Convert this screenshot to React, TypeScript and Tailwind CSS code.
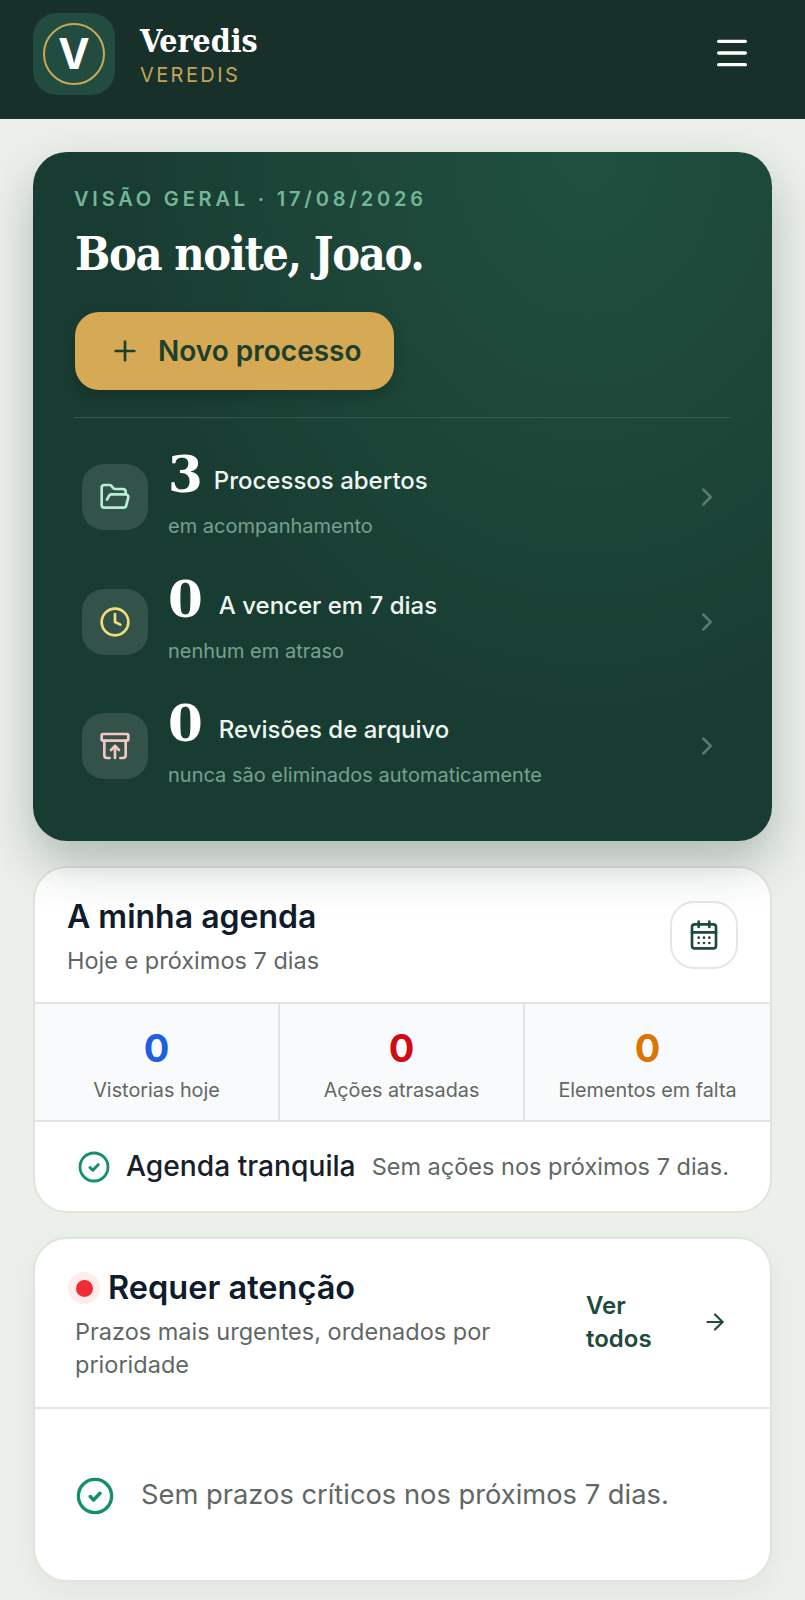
import { ArchiveRestore, ArrowRight, CalendarDays, ChevronRight, Clock, FolderOpen, Menu, Plus } from "lucide-react";

const SERIF = "font-['DejaVu_Serif_Condensed','DejaVu_Serif',serif]";

const STATS = [
  { n: "3", gap: "gap-[11px]", label: "Processos abertos", sub: "em acompanhamento", Icon: FolderOpen, color: "text-[#b5f0d6]" },
  { n: "0", gap: "gap-[16px]", label: "A vencer em 7 dias", sub: "nenhum em atraso", Icon: Clock, color: "text-[#f5dc7c]" },
  { n: "0", gap: "gap-[16px]", label: "Revisões de arquivo", sub: "nunca são eliminados automaticamente", Icon: ArchiveRestore, color: "text-[#f7c6c2]" },
];

const AGENDA = [
  { n: "0", label: "Vistorias hoje", color: "text-[#1d5fe0]" },
  { n: "0", label: "Ações atrasadas", color: "text-[#d10a14]" },
  { n: "0", label: "Elementos em falta", color: "text-[#d97706]" },
];

function Check({ size }: { size: number }) {
  return (
    <svg width={size} height={size} viewBox="0 0 32 32" fill="none" className="shrink-0 text-[#12906a]">
      <circle cx="16" cy="16" r="14" stroke="currentColor" strokeWidth="2.8" />
      <path d="M12 16.5l2.8 2.8 5.4-5.6" stroke="currentColor" strokeWidth="3" strokeLinecap="round" strokeLinejoin="round" />
    </svg>
  );
}

export default function App() {
  return (
    <div className="h-[1600px] overflow-hidden bg-[#ecf0ea] font-['Inter',sans-serif]">
      {/* Header */}
      <header className="flex h-[119px] items-start justify-between bg-[#17302a] pl-[33px] pr-[53px] pt-[13px]">
        <div className="flex items-center gap-[25px]">
          <div className="flex h-[82px] w-[82px] items-center justify-center rounded-[24px] bg-[#214c3f]">
            <div className="flex h-[62px] w-[62px] items-center justify-center rounded-full border-[2.5px] border-[#c9a85a] text-[42px] font-bold leading-none text-white">
              V
            </div>
          </div>
          <div className="-mt-[1px]">
            <div className={`${SERIF} text-[31.8px] font-bold leading-[40px] text-white`}>Veredis</div>
            <div className="mt-[2px] text-[20px] leading-[24px] tracking-[0.12em] text-[#c4a458]">VEREDIS</div>
          </div>
        </div>
        <Menu size={40} strokeWidth={2} className="mt-[20px] text-white" />
      </header>

      <main className="flex flex-col gap-[25px] px-[33px] pt-[33px]">
        {/* Visão geral */}
        <section className="relative z-10 h-[689px] rounded-[34px] bg-[radial-gradient(ellipse_at_75%_0%,#20503f_0%,#1c4538_35%,#193c32_60%)] px-[41px] pt-[33px] shadow-[0_22px_50px_rgba(23,48,42,0.28)]">
          <div className="text-[20px] font-semibold leading-[28px] tracking-[0.19em] text-[#74b798]">
            VISÃO GERAL · 17/08/2026
          </div>
          <h1 className={`${SERIF} ml-[1px] mt-[10px] text-[46.5px] font-bold leading-[62px] tracking-[-0.03em] text-white`}>
            Boa noite, Joao.
          </h1>
          <button
            type="button"
            className="ml-[1px] mt-[27px] flex h-[78px] w-[319px] items-center gap-[17px] rounded-[24px] bg-[#d6a955] pl-[34px] text-[28px] font-semibold text-[#1e3f2b] shadow-[0_6px_14px_rgba(0,0,0,0.18)]"
          >
            <Plus size={32} strokeWidth={2} />
            Novo processo
          </button>
          <div className="mt-[27px] border-t border-[#36594f]" />
          <ul className="mt-[17px] flex flex-col">
            {STATS.map((s) => (
              <li key={s.label} className="flex h-[124.5px] items-center">
                <div className="ml-[8px] flex h-[66px] w-[66px] shrink-0 items-center justify-center rounded-[22px] bg-[#33534a]">
                  <s.Icon size={32} strokeWidth={2} className={s.color} />
                </div>
                <div className="ml-[20px] flex-1 pb-[10px]">
                  <div className={`flex items-baseline ${s.gap}`}>
                    <span className="translate-y-[3px] font-['DejaVu_Serif',serif] text-[50px] font-bold leading-[56px] text-white">
                      {s.n}
                    </span>
                    <span className="text-[24px] font-medium text-[#eef6f1]">{s.label}</span>
                  </div>
                  <div className="mt-[12px] text-[20px] leading-[28px] text-[#76a190]">{s.sub}</div>
                </div>
                <ChevronRight size={30} strokeWidth={2} className="mr-[9px] text-[#58796f]" />
              </li>
            ))}
          </ul>
        </section>

        {/* Agenda */}
        <section className="overflow-hidden rounded-[34px] border-2 border-[#e0e4dd] bg-white">
          <div className="flex h-[134px] items-start justify-between px-[32px] pt-[29px]">
            <div>
              <h2 className="text-[32px] font-semibold leading-[40px] text-[#101c2c]">A minha agenda</h2>
              <p className="mt-[8px] text-[23.5px] leading-[32px] text-[#5f6864]">Hoje e próximos 7 dias</p>
            </div>
            <div className="mt-[4px] flex h-[68px] w-[68px] items-center justify-center rounded-[24px] border-2 border-[#e5e7e2]">
              <CalendarDays size={32} strokeWidth={2} className="text-[#1e4a3d]" />
            </div>
          </div>
          <div className="grid h-[120px] grid-cols-3 divide-x-2 divide-[#e1e4e1] border-y-2 border-[#e1e4e1] bg-[#f9fafb]">
            {AGENDA.map((a) => (
              <div key={a.label} className="flex flex-col items-center pt-[24px]">
                <span className={`text-[38px] font-bold leading-[40px] ${a.color}`}>{a.n}</span>
                <span className="mt-[7px] text-[19.8px] leading-[30px] text-[#5f6864]">{a.label}</span>
              </div>
            ))}
          </div>
          <div className="flex h-[89px] items-center pl-[43px]">
            <Check size={32} />
            <span className="ml-[16px] text-[28.2px] font-medium text-[#17202a]">Agenda tranquila</span>
            <span className="ml-[16px] text-[23.5px] text-[#5f6864]">Sem ações nos próximos 7 dias.</span>
          </div>
        </section>

        {/* Requer atenção */}
        <section className="-mt-[1px] overflow-hidden rounded-[34px] border-2 border-[#e0e4dd] bg-white shadow-[0_10px_30px_rgba(23,48,42,0.05)]">
          <div className="flex h-[168px] items-start justify-between pl-[33px] pr-[42px] pt-[29px]">
            <div className="w-[440px]">
              <div className="flex items-center gap-[8px]">
                <span className="flex h-[32px] w-[32px] items-center justify-center rounded-full bg-[#fdecec]">
                  <span className="h-[17px] w-[17px] rounded-full bg-[#ef2b36]" />
                </span>
                <h2 className="text-[32.5px] font-semibold leading-[40px] text-[#101c2c]">Requer atenção</h2>
              </div>
              <p className="ml-[7px] mt-[7px] text-[23.5px] leading-[33px] text-[#5f6864]">
                Prazos mais urgentes, ordenados por prioridade
              </p>
            </div>
            <a className="ml-[-2px] mt-[21px] flex items-center gap-[32px] text-[#1e4a3d]">
              <span className="w-[84px] text-[24px] font-semibold leading-[33px]">Ver todos</span>
              <ArrowRight size={26} strokeWidth={2} />
            </a>
          </div>
          <div className="flex h-[173px] items-center gap-[27px] border-t-2 border-[#e1e4e1] pt-[2px] pl-[41px]">
            <Check size={38} />
            <span className="text-[27.3px] text-[#5f6864]">Sem prazos críticos nos próximos 7 dias.</span>
          </div>
        </section>
      </main>
    </div>
  );
}
